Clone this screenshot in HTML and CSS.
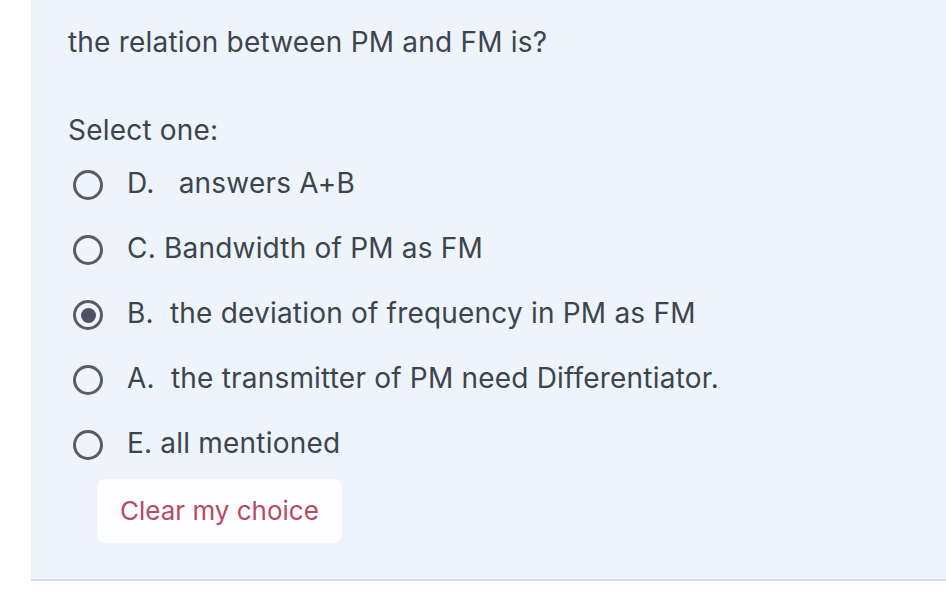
FILE: index.html
```html
<!DOCTYPE html>
<html>
<head>
<meta charset="utf-8">
<link rel="stylesheet" href="styles.css">
</head>
<body>
<div class="panel">
  <div class="question">the relation between PM and FM is?</div>
  <div class="prompt">Select one:</div>
  <div class="answers">
    <div class="option"><span class="radio"></span><span class="label">D.&nbsp;&nbsp; answers A+B</span></div>
    <div class="option"><span class="radio"></span><span class="label">C. Bandwidth of PM as FM</span></div>
    <div class="option"><span class="radio checked"></span><span class="label">B.&nbsp; the deviation of frequency in PM as FM</span></div>
    <div class="option"><span class="radio"></span><span class="label">A.&nbsp; the transmitter of PM need Differentiator.</span></div>
    <div class="option"><span class="radio"></span><span class="label">E. all mentioned</span></div>
  </div>
  <div class="clear"><span class="clear-btn">Clear my choice</span></div>
</div>
</body>
</html>
```
FILE: styles.css
```css
html, body {
  margin: 0;
  padding: 0;
  background: #ffffff;
}
body {
  font-family: Inter, "Noto Sans", sans-serif;
  color: #3d444b;
  letter-spacing: 0.2px;
}
.panel {
  margin-left: 31px;
  height: 579px;
  background: #edf4fc;
  border-bottom: 2px solid #d8dfe6;
  padding: 0 0 0 37px;
  display: flex;
  flex-direction: column;
}
.question {
  font-size: 28px;
  line-height: 36px;
  margin-top: 24px;
}
.prompt {
  font-size: 28px;
  line-height: 36px;
  margin-top: 52px;
}
.answers {
  display: flex;
  flex-direction: column;
  margin-top: 2px;
}
.option {
  display: flex;
  align-items: center;
  height: 65px;
}
.radio {
  width: 24px;
  height: 24px;
  border: 3px solid #575d63;
  border-radius: 50%;
  margin-left: 5px;
  margin-top: 5px;
  flex: none;
  display: flex;
  align-items: center;
  justify-content: center;
}
.radio.checked::after {
  content: "";
  width: 15px;
  height: 15px;
  border-radius: 50%;
  background: #4c5264;
}
.label {
  font-size: 28px;
  line-height: 36px;
  margin-left: 24px;
}
.clear {
  display: flex;
  margin-top: 4px;
  margin-left: 29px;
}
.clear-btn {
  background: #fdfdff;
  border-radius: 8px;
  padding: 15px 23px;
  font-size: 26px;
  line-height: 34px;
  color: #b94a60;
  letter-spacing: 0;
}
```
